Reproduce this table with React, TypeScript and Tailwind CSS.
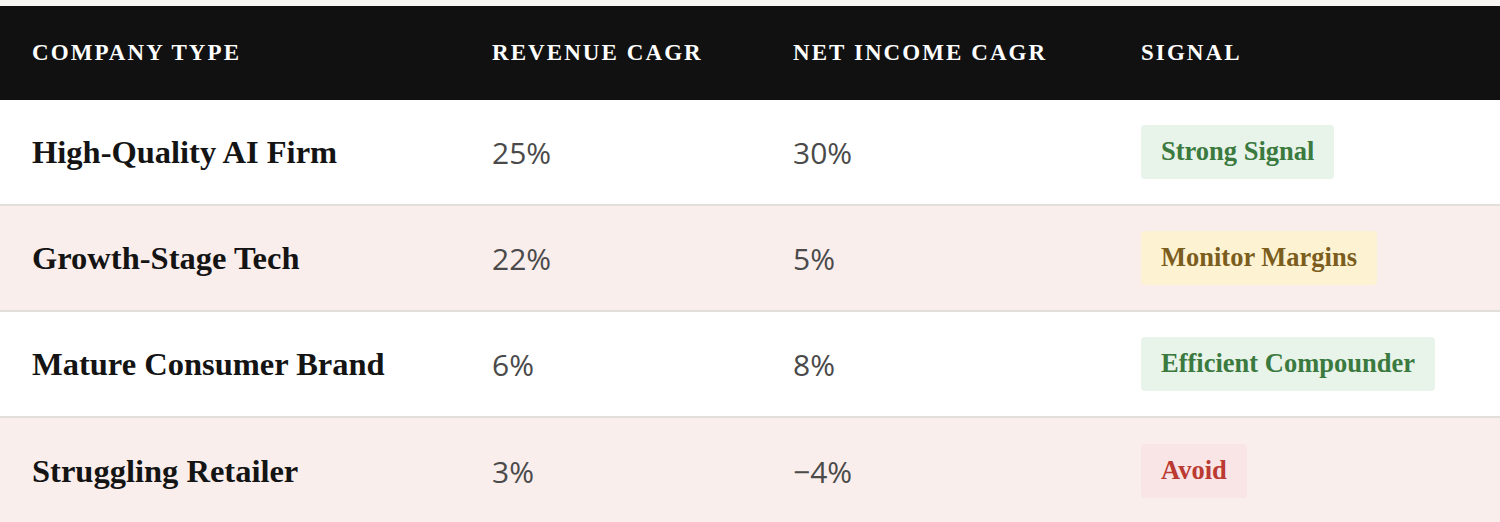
const rows = [
  {
    name: 'High-Quality AI Firm',
    revenue: '25%',
    income: '30%',
    signal: 'Strong Signal',
    tone: 'green',
    bg: 'bg-white',
  },
  {
    name: 'Growth-Stage Tech',
    revenue: '22%',
    income: '5%',
    signal: 'Monitor Margins',
    tone: 'yellow',
    bg: 'bg-[#faeeec]',
  },
  {
    name: 'Mature Consumer Brand',
    revenue: '6%',
    income: '8%',
    signal: 'Efficient Compounder',
    tone: 'green',
    bg: 'bg-white',
  },
  {
    name: 'Struggling Retailer',
    revenue: '3%',
    income: '\u22124%',
    signal: 'Avoid',
    tone: 'red',
    bg: 'bg-[#faeeec]',
  },
];

const badgeTone: Record<string, string> = {
  green: 'bg-[#e8f3ea] text-[#3b7a3e]',
  yellow: 'bg-[#fdf3d3] text-[#7b5d1d]',
  red: 'bg-[#f9e5e6] text-[#bb3a32]',
};

const serif = "font-['Liberation_Serif','Times_New_Roman',serif]";
const cols = 'grid grid-cols-[460px_301px_348px_1fr] items-center';

export default function App() {
  return (
    <div className="min-h-[522px] bg-[#f8f6f3] pt-[6px]">
      <div className={`${cols} h-[94px] bg-[#111111] text-white`}>
        {['Company Type', 'Revenue CAGR', 'Net Income CAGR', 'Signal'].map(
          (h) => (
            <div
              key={h}
              className={`${serif} pl-8 text-[23px] font-bold uppercase tracking-[0.09em]`}
            >
              {h}
            </div>
          ),
        )}
      </div>
      {rows.map((row, i) => (
        <div
          key={row.name}
          className={`${cols} h-[106px] ${row.bg} ${
            i < rows.length - 1 ? 'border-b-2 border-[#e2dedb]' : ''
          }`}
        >
          <div className={`${serif} pl-8 text-[32.5px] font-bold text-[#141414]`}>
            {row.name}
          </div>
          <div className="pl-8 font-['Open_Sans',sans-serif] text-[30px] text-[#4a4a4a]">
            {row.revenue}
          </div>
          <div className="pl-8 font-['Open_Sans',sans-serif] text-[30px] text-[#4a4a4a]">
            {row.income}
          </div>
          <div className="pl-8">
            <span
              className={`${serif} inline-flex h-[54px] items-center rounded-[4px] px-5 text-[26.5px] font-bold ${badgeTone[row.tone]}`}
            >
              {row.signal}
            </span>
          </div>
        </div>
      ))}
    </div>
  );
}
